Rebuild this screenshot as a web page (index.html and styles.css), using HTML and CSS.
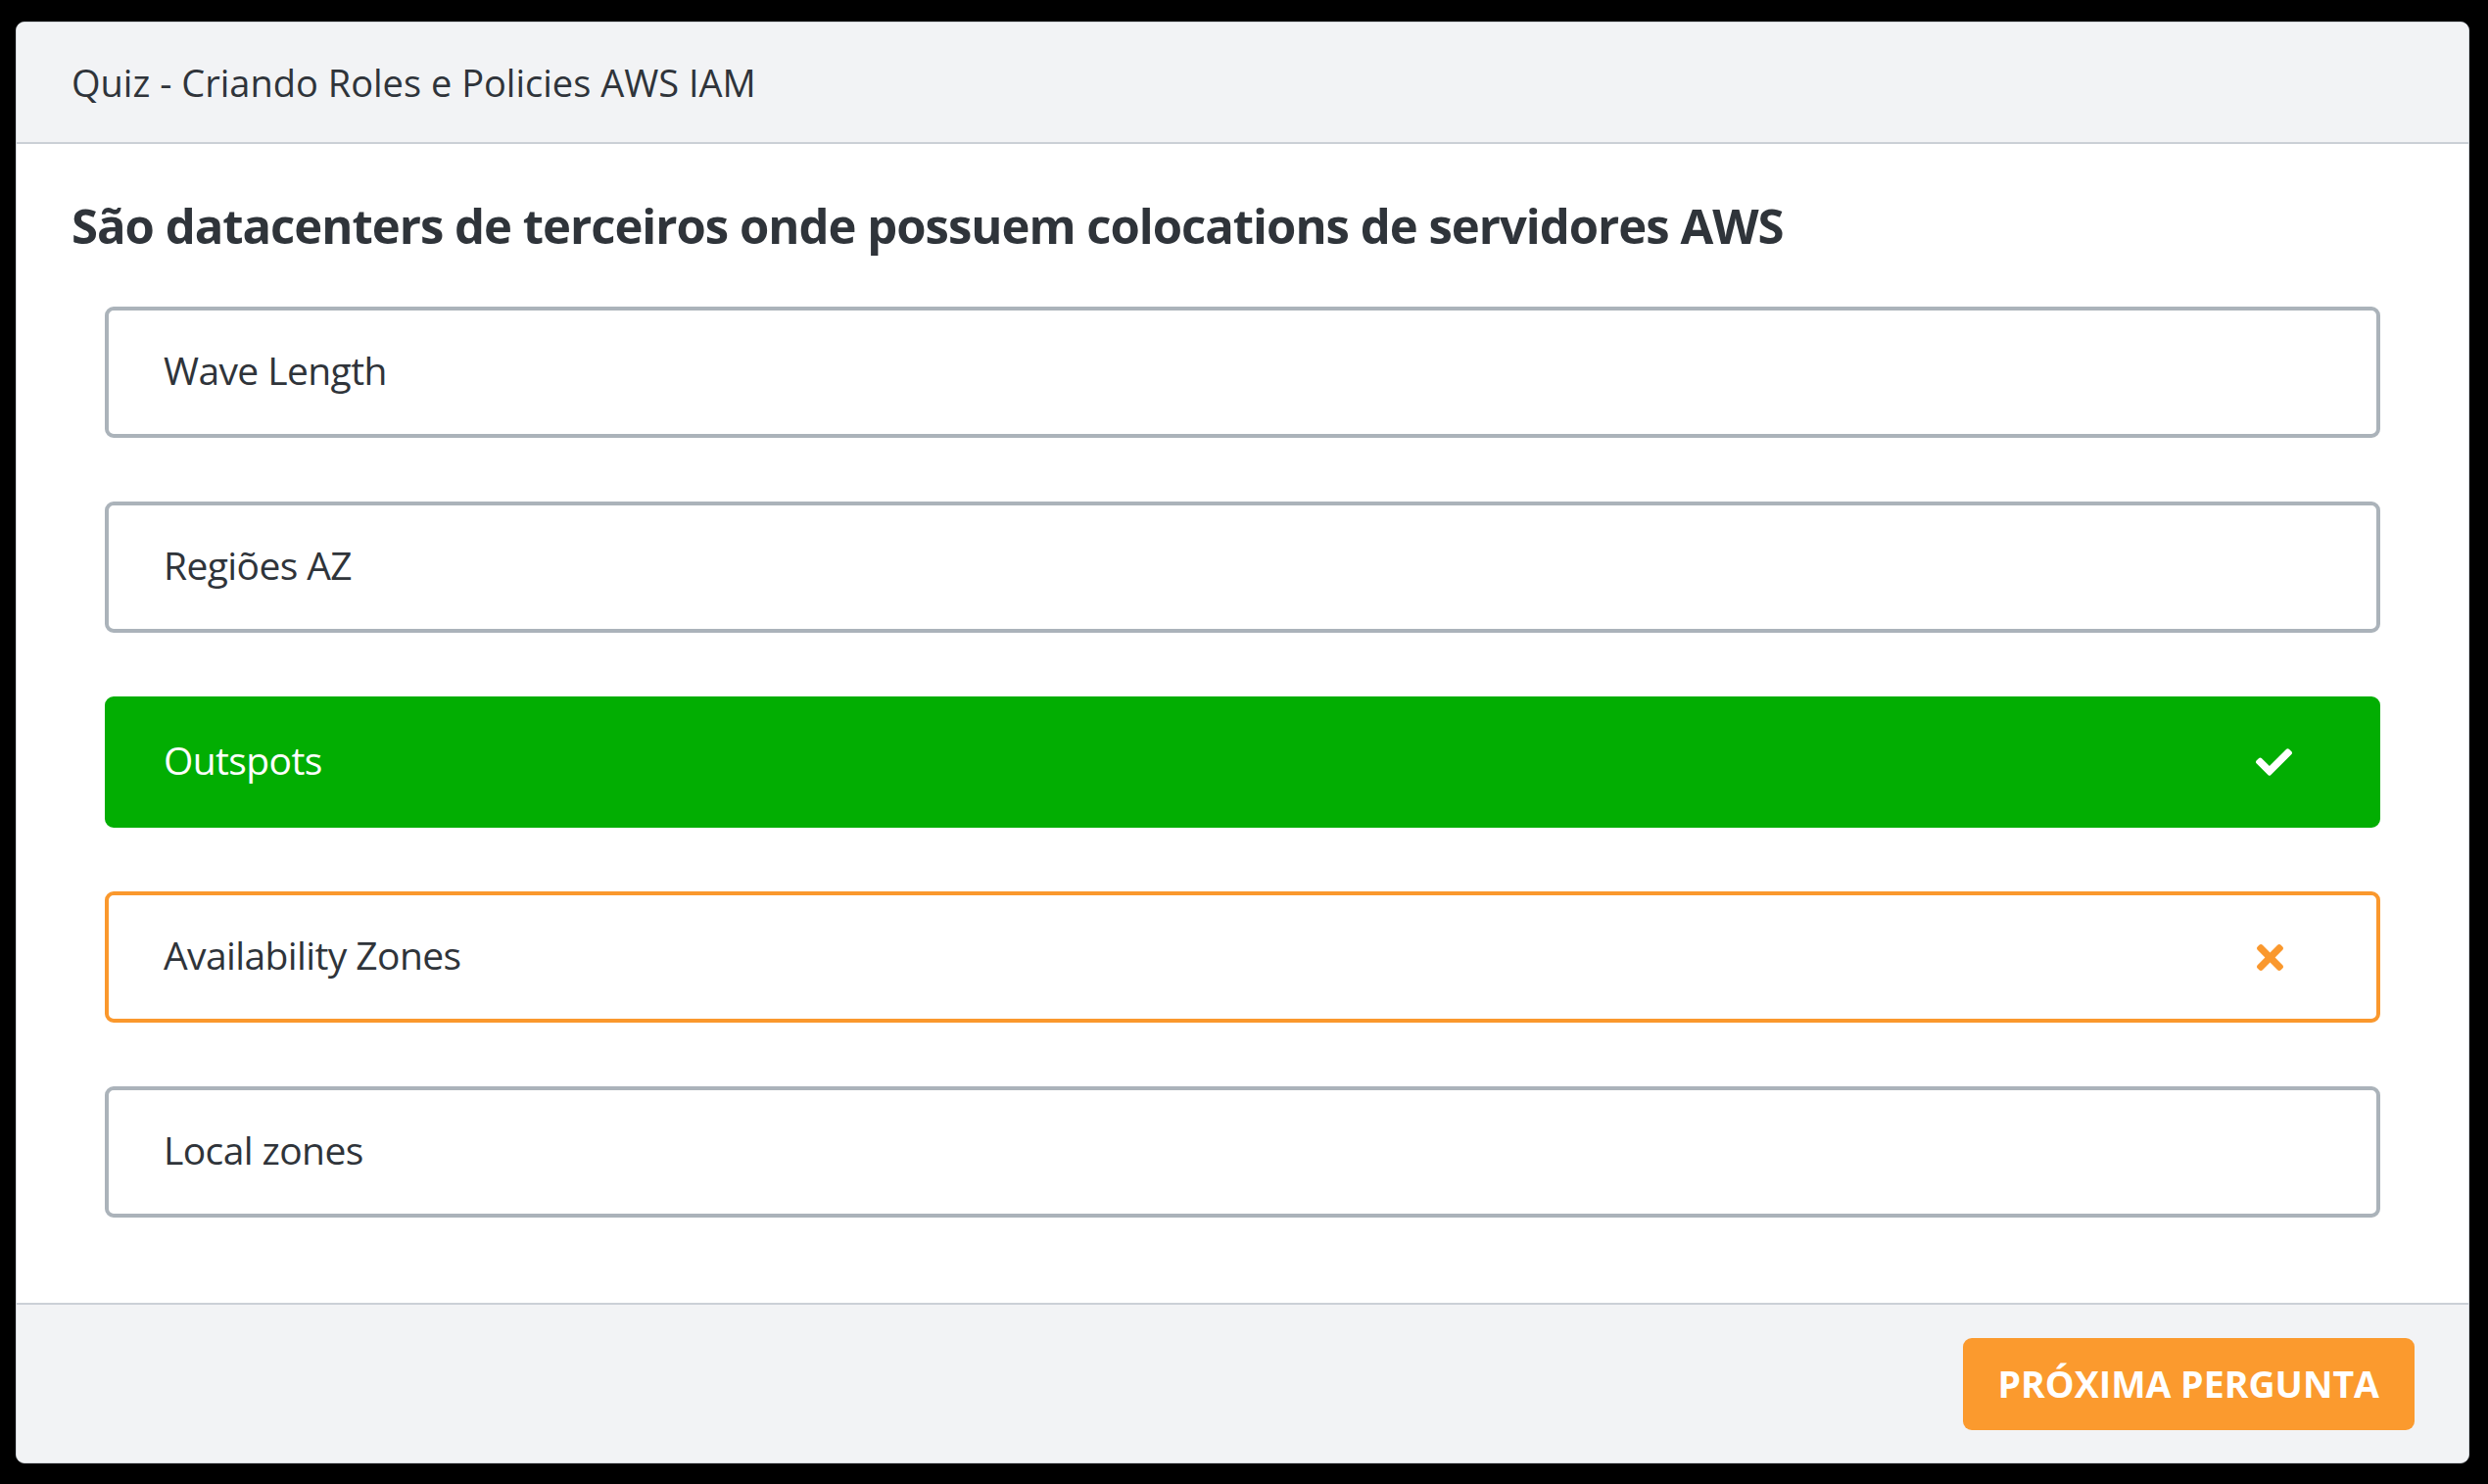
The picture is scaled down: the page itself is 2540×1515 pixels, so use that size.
FILE: index.html
```html
<!DOCTYPE html>
<html lang="pt-BR">
<head>
<meta charset="utf-8">
<title>Quiz</title>
<link rel="stylesheet" href="styles.css">
</head>
<body>
<div class="modal">
  <header class="modal-header">
    <h1 class="modal-title">Quiz - Criando Roles e Policies AWS IAM</h1>
  </header>
  <main class="modal-body">
    <h2 class="question">São datacenters de terceiros onde possuem colocations de servidores AWS</h2>
    <ul class="options">
      <li class="option"><span class="option-label">Wave Length</span></li>
      <li class="option"><span class="option-label">Regiões AZ</span></li>
      <li class="option option-correct">
        <span class="option-label">Outspots</span>
        <svg class="icon icon-check" viewBox="0 64 512 384" aria-hidden="true"><path fill="currentColor" d="M173.898 439.404l-166.4-166.4c-9.997-9.997-9.997-26.206 0-36.204l36.203-36.204c9.997-9.998 26.207-9.998 36.204 0L192 312.69 432.095 72.596c9.997-9.997 26.207-9.997 36.204 0l36.203 36.204c9.997 9.997 9.997 26.206 0 36.204l-294.4 294.401c-9.998 9.997-26.207 9.997-36.204-.001z"/></svg>
      </li>
      <li class="option option-wrong">
        <span class="option-label">Availability Zones</span>
        <svg class="icon icon-times" viewBox="0 80 352 352" aria-hidden="true"><path fill="currentColor" d="M242.72 256l100.07-100.07c12.28-12.28 12.28-32.19 0-44.48l-22.24-22.24c-12.28-12.28-32.19-12.28-44.48 0L176 189.28 75.930 89.21c-12.28-12.28-32.19-12.28-44.48 0L9.21 111.45c-12.28 12.28-12.28 32.190 0 44.48L109.28 256 9.21 356.07c-12.28 12.28-12.28 32.19 0 44.48l22.24 22.24c12.28 12.28 32.2 12.28 44.48 0L176 322.72l100.07 100.07c12.28 12.28 32.2 12.28 44.48 0l22.24-22.24c12.28-12.28 12.28-32.19 0-44.48L242.72 256z"/></svg>
      </li>
      <li class="option"><span class="option-label">Local zones</span></li>
    </ul>
  </main>
  <footer class="modal-footer">
    <button class="btn-next" type="button">Próxima pergunta</button>
  </footer>
</div>
</body>
</html>
```

FILE: styles.css
```css
html, body {
  margin: 0;
  padding: 0;
  background: #000;
}

body {
  padding: 22px 19px 23px 16px;
  font-family: "Open Sans", "Noto Sans", "Liberation Sans", sans-serif;
  color: #2f343a;
}

.modal {
  display: flex;
  flex-direction: column;
  height: 1470px;
  background: #fff;
  border: 1px solid #d3d7dc;
  border-radius: 9px;
  overflow: hidden;
}

.modal-header {
  display: flex;
  align-items: center;
  height: 122px;
  padding: 0 56px;
  background: #f2f3f5;
  border-bottom: 2px solid #cbd0d6;
}

.modal-title {
  margin: 0;
  font-size: 38px;
  font-weight: 400;
  color: #2f343a;
}

.modal-body {
  flex: 1;
  padding: 0 56px;
}

.question {
  margin: 46px 0 0;
  font-size: 49px;
  font-weight: 700;
  line-height: 74px;
  letter-spacing: -1px;
  color: #2f343a;
}

.options {
  list-style: none;
  margin: 46px 0 0;
  padding: 0 34px;
  display: flex;
  flex-direction: column;
  gap: 65px;
}

.option {
  display: flex;
  align-items: center;
  height: 134px;
  box-sizing: border-box;
  padding: 0 86px 0 56px;
  border: 4px solid #abb3ba;
  border-radius: 9px;
  font-size: 39px;
  letter-spacing: -0.6px;
  color: #2f343a;
}

.option-label {
  flex: 1;
  padding-bottom: 6px;
}

.option-correct {
  background: #02ae02;
  border-color: #02ae02;
  color: #fff;
}

.option-wrong {
  border-color: #fa982d;
}

.icon {
  display: block;
}

.icon-check {
  width: 37px;
  height: 28px;
  color: #fff;
}

.icon-times {
  width: 27px;
  height: 27px;
  margin-right: 9px;
  color: #fa982d;
}

.modal-footer {
  display: flex;
  align-items: center;
  justify-content: flex-end;
  height: 161px;
  padding: 0 55px;
  background: #f2f3f5;
  border-top: 2px solid #cbd0d6;
}

.btn-next {
  height: 94px;
  padding: 0 36px;
  background: #fb9a2e;
  border: none;
  border-radius: 9px;
  color: #fff;
  font-family: "Open Sans", "Noto Sans", "Liberation Sans", sans-serif;
  font-size: 37.5px;
  font-weight: 700;
  text-transform: uppercase;
}
```
